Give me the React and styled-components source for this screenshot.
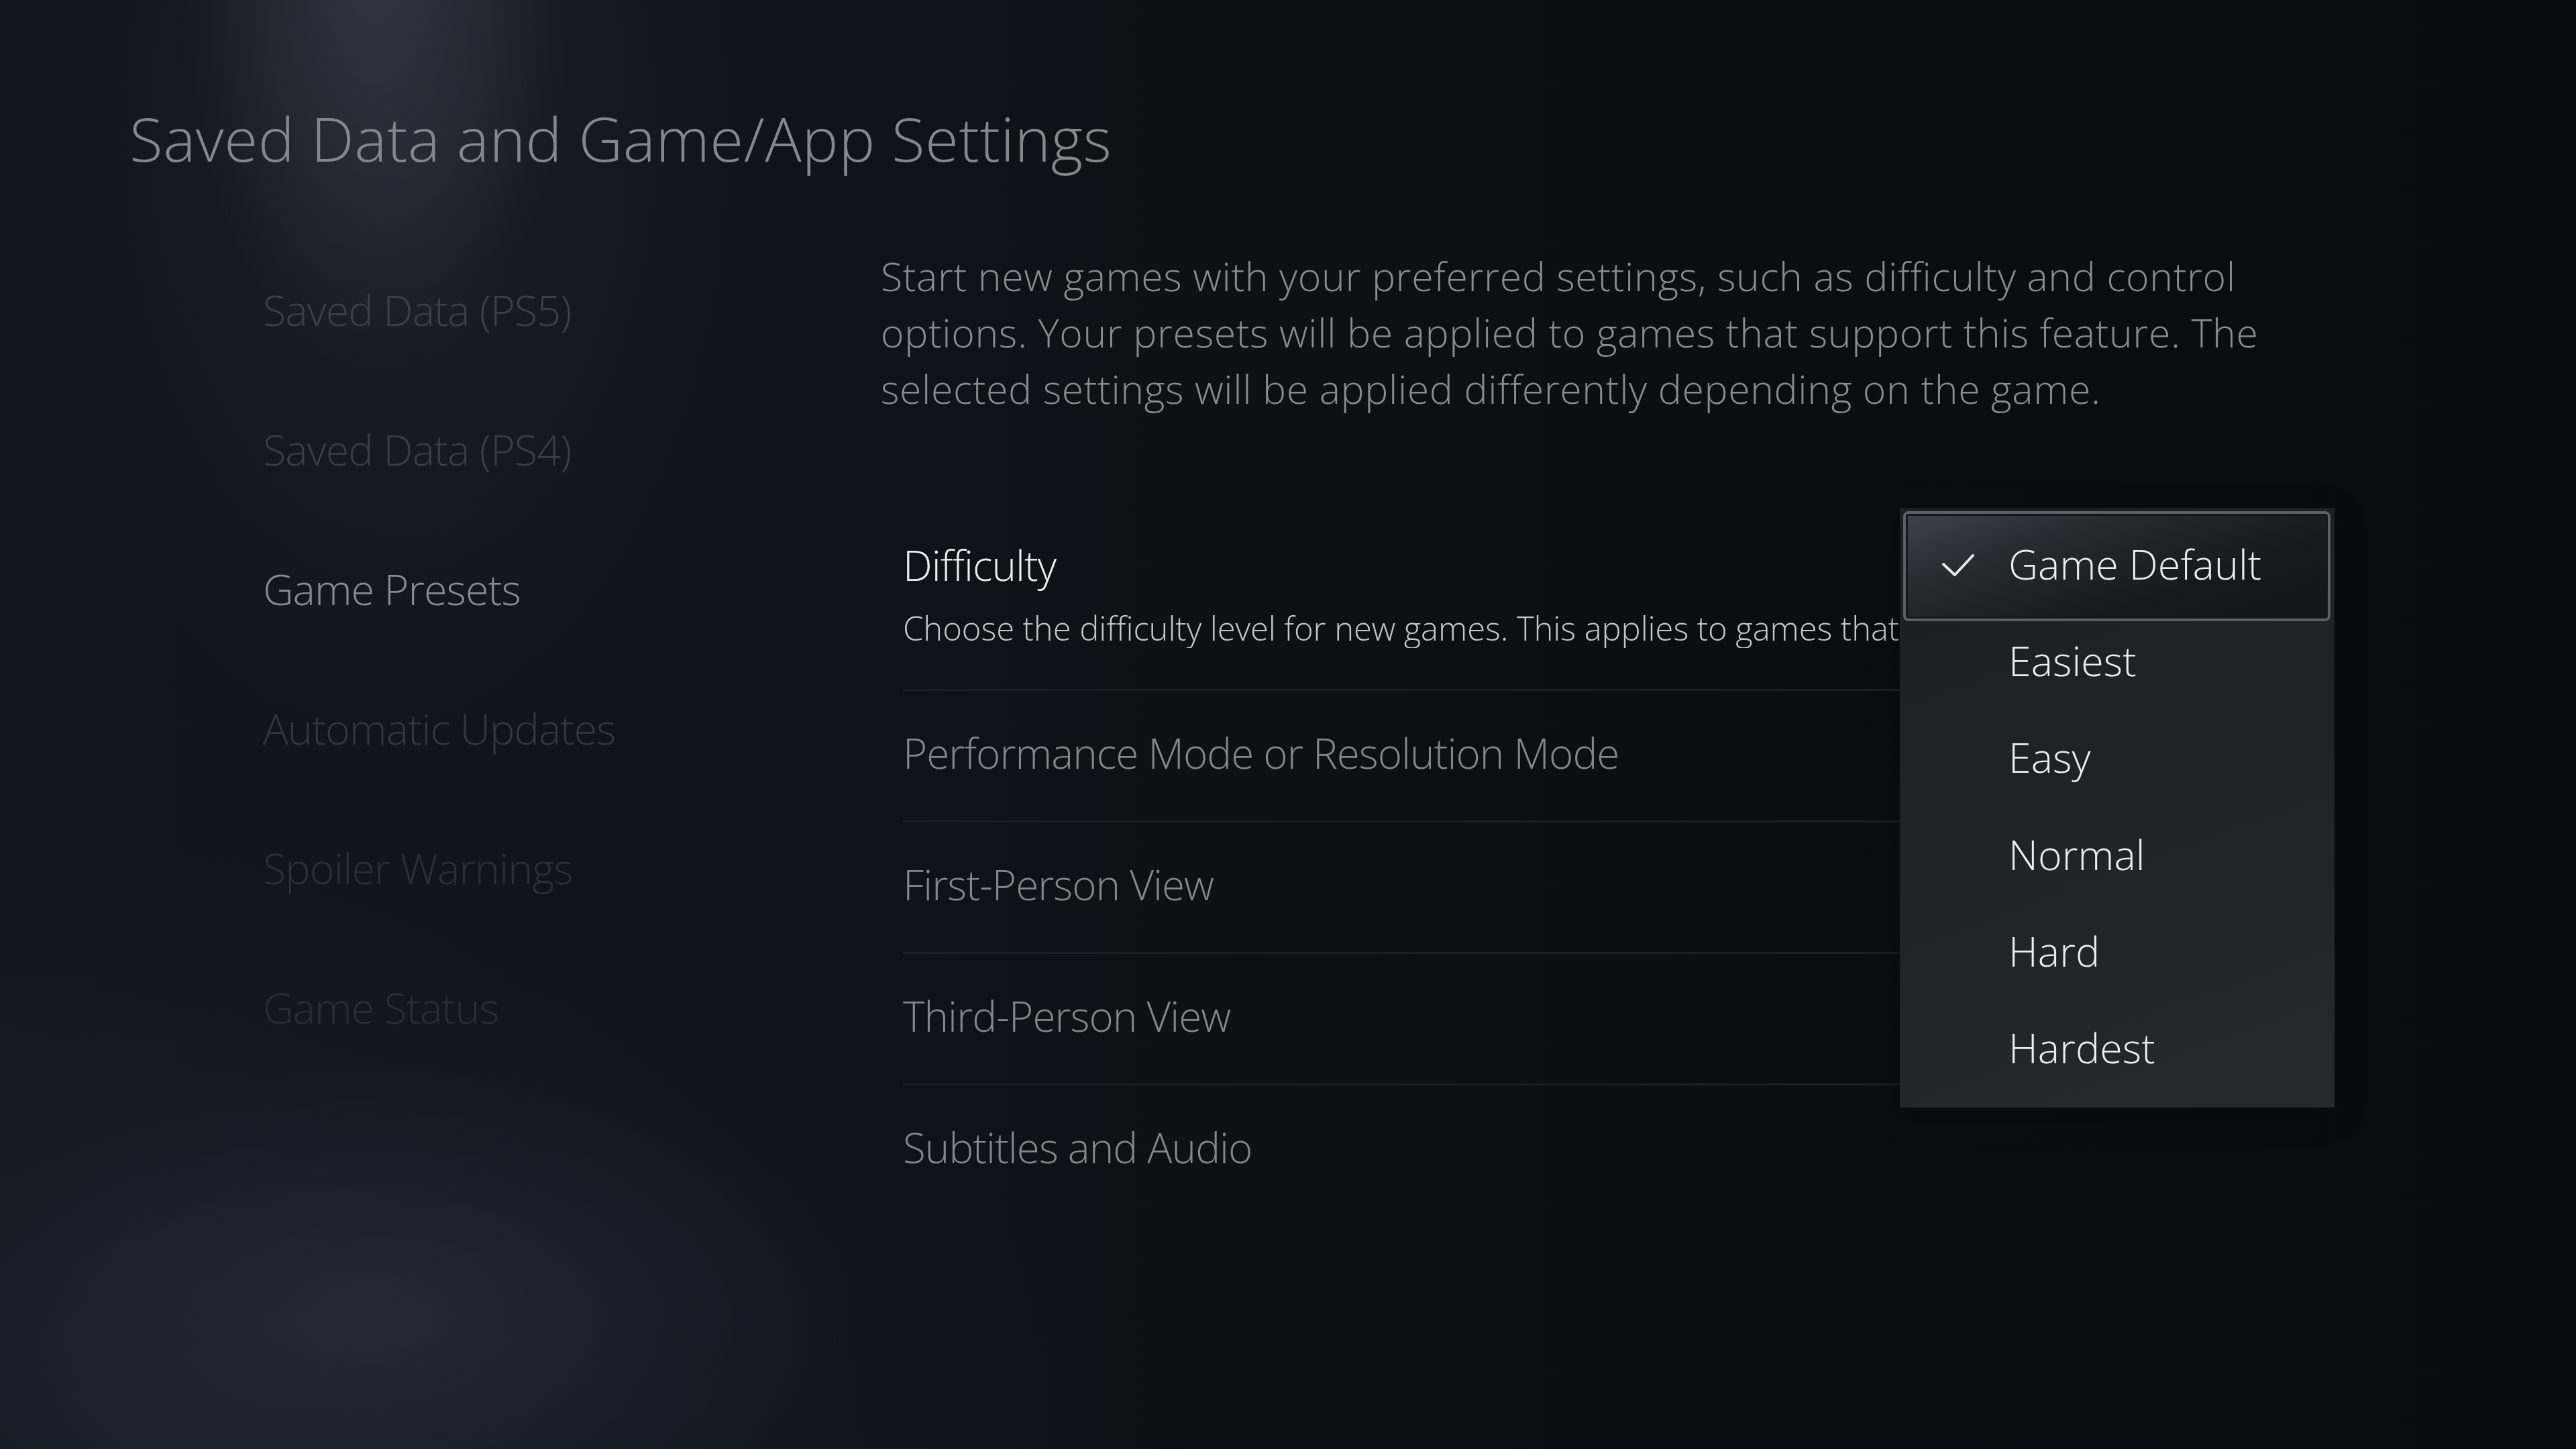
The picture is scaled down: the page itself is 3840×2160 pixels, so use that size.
import styled, { createGlobalStyle } from "styled-components";

const GlobalStyle = createGlobalStyle`
  html, body {
    margin: 0;
    padding: 0;
    background: #0c0f15;
  }
  * {
    box-sizing: border-box;
  }
`;

const Page = styled.div`
  position: relative;
  width: 3840px;
  height: 2160px;
  overflow: hidden;
  font-family: "Open Sans", "Noto Sans", sans-serif;
  font-weight: 300;
  background:
    radial-gradient(ellipse 300px 620px at 560px -60px, rgba(78, 80, 94, 0.5), rgba(78, 80, 94, 0) 100%),
    radial-gradient(ellipse 560px 950px at 620px 200px, rgba(40, 42, 52, 0.45), rgba(40, 42, 52, 0) 100%),
    radial-gradient(ellipse 720px 380px at 560px 1960px, rgba(44, 50, 64, 0.6), rgba(44, 50, 64, 0) 100%),
    radial-gradient(ellipse 1400px 900px at 200px 2160px, rgba(30, 35, 46, 0.6), rgba(30, 35, 46, 0) 100%),
    linear-gradient(90deg, #12151d 0%, #0f121a 35%, #0b0d12 70%, #090b0f 100%);
`;

const Title = styled.h1`
  margin: 0;
  padding: 152px 0 0 193px;
  font-size: 91px;
  line-height: 109px;
  font-weight: 300;
  color: #86878c;
  letter-spacing: 0.5px;
`;

const Body = styled.div`
  display: flex;
  margin-top: 97px;
`;

const Sidebar = styled.nav`
  display: flex;
  flex-direction: column;
  width: 1313px;
  padding-left: 392px;
`;

const NavItem = styled.div`
  height: 208px;
  line-height: 208px;
  font-size: 63px;
  letter-spacing: -1px;
  white-space: nowrap;
  color: ${(p) => p.$color};
`;

const Main = styled.main`
  display: flex;
  flex-direction: column;
  width: 2130px;
  padding-top: 11px;
`;

const Description = styled.p`
  margin: 0;
  width: 2110px;
  font-size: 59px;
  line-height: 84px;
  letter-spacing: 0.6px;
  color: #8a8b90;
`;

const List = styled.div`
  display: flex;
  flex-direction: column;
  margin-left: 33px;
  margin-top: 184px;
`;

const Row = styled.div`
  display: flex;
  flex-direction: column;
  border-top: ${(p) => (p.$first ? "none" : "3px solid #1b1e25")};
  padding: ${(p) => (p.$first ? "0 0 61px" : "55px 0 64px")};
`;

const RowLabel = styled.div`
  font-size: 62px;
  line-height: 74px;
  letter-spacing: -1px;
  white-space: nowrap;
  color: ${(p) => (p.$active ? "#ececec" : "#85868b")};
`;

const RowHint = styled.div`
  width: 1486px;
  margin-top: 27px;
  font-size: 49px;
  line-height: 60px;
  letter-spacing: -0.1px;
  color: #c6c7ca;
  white-space: nowrap;
  overflow: hidden;
`;

const Dropdown = styled.div`
  position: absolute;
  left: 2832px;
  top: 757px;
  width: 648px;
  height: 894px;
  padding: 11px 6px 17px 5px;
  display: flex;
  flex-direction: column;
  background: linear-gradient(160deg, #1d1e22 0%, #222327 55%, #27282c 100%);
  box-shadow: 0 10px 40px rgba(0, 0, 0, 0.35);
`;

const Option = styled.div`
  position: relative;
  display: flex;
  align-items: center;
  height: 144.5px;
  padding-left: 157px;
  font-size: 61px;
  font-weight: 300;
  color: #ececec;
  white-space: nowrap;

  &::before {
    content: "";
    display: ${(p) => (p.$focused ? "block" : "none")};
    position: absolute;
    top: -6px;
    bottom: -14px;
    left: 0;
    right: 0;
    border-radius: 8px;
    border: 4px solid #5f5d65;
    box-shadow: inset 0 0 0 3px #14161b;
    background: linear-gradient(160deg, #3d424c 0%, #262a31 30%, #16181d 70%, #131519 100%);
  }
`;

const OptionText = styled.span`
  position: relative;
`;

const Check = styled.svg`
  position: absolute;
  left: 57px;
  top: 57px;
  width: 50px;
  height: 36px;
`;

const navItems = [
  { label: "Saved Data (PS5)", color: "#3c3f46" },
  { label: "Saved Data (PS4)", color: "#3a3d44" },
  { label: "Game Presets", color: "#8a8b90" },
  { label: "Automatic Updates", color: "#33363d" },
  { label: "Spoiler Warnings", color: "#2c2f36" },
  { label: "Game Status", color: "#2a2d34" },
];

const rows = [
  "Performance Mode or Resolution Mode",
  "First-Person View",
  "Third-Person View",
  "Subtitles and Audio",
];

const options = ["Game Default", "Easiest", "Easy", "Normal", "Hard", "Hardest"];

export default function App() {
  return (
    <Page>
      <GlobalStyle />
      <Title>Saved Data and Game/App Settings</Title>
      <Body>
        <Sidebar>
          {navItems.map((item) => (
            <NavItem key={item.label} $color={item.color}>
              {item.label}
            </NavItem>
          ))}
        </Sidebar>
        <Main>
          <Description>
            Start new games with your preferred settings, such as difficulty and control
            options. Your presets will be applied to games that support this feature. The
            selected settings will be applied differently depending on the game.
          </Description>
          <List>
            <Row $first>
              <RowLabel $active>Difficulty</RowLabel>
              <RowHint>
                Choose the difficulty level for new games. This applies to games that support this feature.
              </RowHint>
            </Row>
            {rows.map((label) => (
              <Row key={label}>
                <RowLabel>{label}</RowLabel>
              </Row>
            ))}
          </List>
        </Main>
      </Body>
      <Dropdown>
        {options.map((opt, i) => (
          <Option key={opt} $focused={i === 0}>
            {i === 0 && (
              <Check viewBox="0 0 50 36">
                <polyline
                  points="3,16 20,32 47,3"
                  fill="none"
                  stroke="#e8e8e8"
                  strokeWidth="4"
                  strokeLinecap="round"
                  strokeLinejoin="round"
                />
              </Check>
            )}
            <OptionText>{opt}</OptionText>
          </Option>
        ))}
      </Dropdown>
    </Page>
  );
}
